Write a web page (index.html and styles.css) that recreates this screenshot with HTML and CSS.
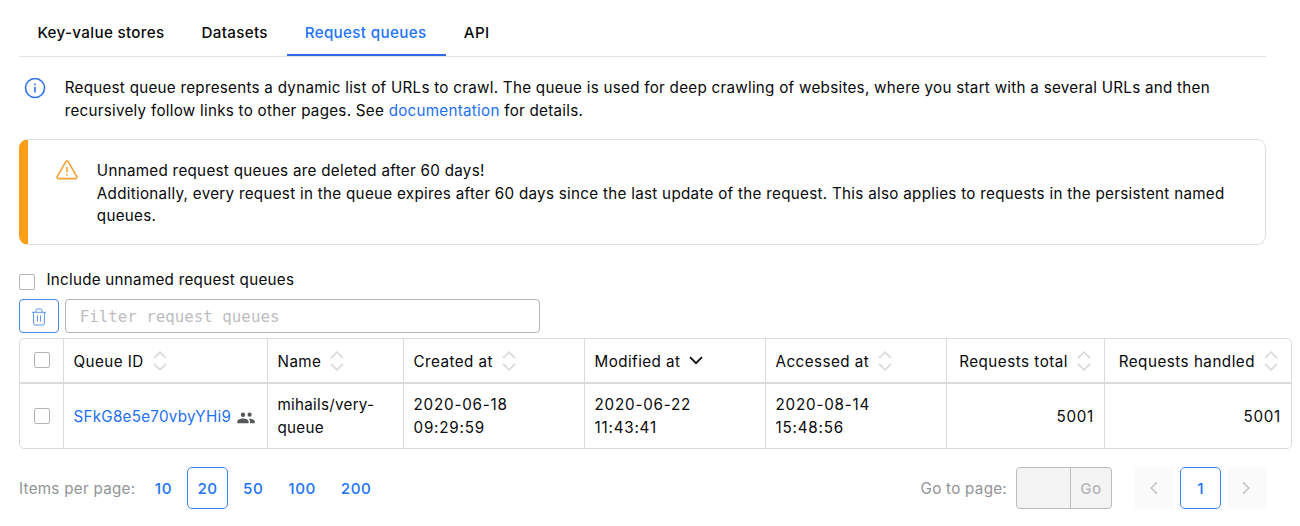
FILE: index.html
```html
<!DOCTYPE html>
<html lang="en">
<head>
<meta charset="utf-8">
<title>Request queues</title>
<link rel="stylesheet" href="styles.css">
</head>
<body>
<svg class="defs" width="0" height="0">
  <symbol id="sort" viewBox="0 0 14 20"><path d="M1 7.2 7 1.2l6 6M1 12.800l6 6 6-6"/></symbol>
</svg>
<main class="page">
  <nav class="tabs">
    <a class="tab tab-stores">Key-value stores</a>
    <a class="tab tab-datasets">Datasets</a>
    <a class="tab tab-queues active">Request queues</a>
    <a class="tab tab-api">API</a>
  </nav>

  <section class="info">
    <svg class="info-icon" viewBox="0 0 22 22"><circle cx="11" cy="11" r="9.5"/><path d="M11 9.800v5.600M11 6.600v1.600"/></svg>
    <p class="text">Request queue represents a dynamic list of URLs to crawl. The queue is used for deep crawling of websites, where you start with a several URLs and then<br>recursively follow links to other pages. See <a class="link">documentation</a> for details.</p>
  </section>

  <section class="warning">
    <svg class="warning-icon" viewBox="0 0 22 20"><path d="M9.700 1.800a1.500 1.500 0 0 1 2.600 0l8.400 14.600a1.500 1.500 0 0 1-1.300 2.200H2.600a1.500 1.500 0 0 1-1.300-2.200z"/><path d="M11 7v5.200M11 14.200v1.500"/></svg>
    <p class="text">Unnamed request queues are deleted after 60 days!<br>Additionally, every request in the queue expires after 60 days since the last update of the request. This also applies to requests in the persistent named<br>queues.</p>
  </section>

  <label class="include"><span class="checkbox"></span><span>Include unnamed request queues</span></label>

  <div class="toolbar">
    <button class="delete"><svg viewBox="0 0 16 18"><path d="M1 4.300h14M5 4V2.300c0-.8.5-1.300 1.300-1.300h3.400c.8 0 1.300.5 1.300 1.300V4M2.600 4.500v11.200c0 .8.5 1.300 1.300 1.300h8.200c.8 0 1.300-.5 1.300-1.300V4.500M6.500 7.500v6M9.500 7.500v6"/></svg></button>
    <div class="filter">Filter request queues</div>
  </div>

  <div class="table">
    <div class="row head">
      <div class="cell check"><span class="checkbox"></span></div>
      <div class="cell"><span>Queue ID</span><svg class="sort"><use href="#sort"/></svg></div>
      <div class="cell"><span>Name</span><svg class="sort"><use href="#sort"/></svg></div>
      <div class="cell"><span>Created at</span><svg class="sort"><use href="#sort"/></svg></div>
      <div class="cell"><span>Modified at</span><svg class="sorted" viewBox="0 0 14 9"><path d="m1 1.200 6 6 6-6"/></svg></div>
      <div class="cell"><span>Accessed at</span><svg class="sort"><use href="#sort"/></svg></div>
      <div class="cell num"><span>Requests total</span><svg class="sort"><use href="#sort"/></svg></div>
      <div class="cell num"><span>Requests handled</span><svg class="sort"><use href="#sort"/></svg></div>
    </div>
    <div class="row body">
      <div class="cell check"><span class="checkbox"></span></div>
      <div class="cell"><a class="link queue-id">SFkG8e5e70vbyYHi9</a><svg class="people" viewBox="0 0 18 12"><circle cx="6" cy="2.700" r="2.200"/><circle cx="12.600" cy="2.700" r="2.100"/><path d="M.3 11.300V9.700C.3 7.700 3.500 6.600 6 6.600s5.600 1.100 5.600 3.100v1.600zM13 11.300V9.600c0-1.200-.5-2.100-1.300-2.900 2.800-.3 6.100.9 6.100 2.900v1.700z"/></svg></div>
      <div class="cell two-line">mihails/very-<br>queue</div>
      <div class="cell two-line date">2020-06-18<br>09:29:59</div>
      <div class="cell two-line date">2020-06-22<br>11:43:41</div>
      <div class="cell two-line date">2020-08-14<br>15:48:56</div>
      <div class="cell num">5001</div>
      <div class="cell num">5001</div>
    </div>
  </div>

  <footer class="footer">
    <div class="sizes">
      <span class="label">Items per page:</span>
      <a class="size">10</a><a class="size selected">20</a><a class="size">50</a><a class="size">100</a><a class="size">200</a>
    </div>
    <div class="pager">
      <span class="label">Go to page:</span>
      <div class="goto"><span class="goto-input"></span><span class="goto-btn">Go</span></div>
      <span class="arrow"><svg viewBox="0 0 8 14"><path d="M7 1.200 1.200 7 7 12.800"/></svg></span>
      <a class="size selected current">1</a>
      <span class="arrow next"><svg viewBox="0 0 8 14"><path d="M1 1.200 6.800 7 1 12.800"/></svg></span>
    </div>
  </footer>
</main>
</body>
</html>
```
FILE: styles.css
```css
* { box-sizing: border-box; }
body { margin: 0; background: #fff; color: #08090b; font: 15.2px/22.6px Inter, "Liberation Sans", sans-serif; letter-spacing: .27px; overflow: hidden; }
.defs { position: absolute; }
svg { fill: none; stroke: currentColor; flex: none; }
.page { width: 1300px; height: 526px; padding: 10px 8px 0 19px; }
.tabs { display: flex; width: 1247px; height: 47px; border-bottom: 1px solid #dfe2e6; font-weight: 500; letter-spacing: .33px; }
.tab { height: 46px; padding: 12px 18px 0 18.400px; white-space: nowrap; }
.tab.active { padding-left: 17.700px; color: #2173f8; border-bottom: 2px solid #2e6be6; }
.tab-stores { width: 164px; }
.tab-datasets { width: 104px; }
.tab-queues { width: 159px; }
.tab-api { padding-left: 17.800px; }
.link { color: #1f70f2; }
.text { margin: 0; white-space: nowrap; }
.info { display: flex; height: 66px; padding: 19px 0 0 5px; gap: 18.700px; }
.info .text { line-height: 23px; }
.info-icon { width: 22px; height: 22px; margin-top: 1px; color: #2e72ec; stroke-width: 1.6; }
.warning { display: flex; gap: 18.800px; width: 1247px; height: 106px; margin-top: 16px; padding: 20px 0 0 28px; border: 1px solid #d9dfe3; border-left: 9px solid #fb9e18; border-radius: 9px; letter-spacing: .29px; }
.warning-icon { width: 22px; height: 20px; color: #f6a030; stroke-width: 1.6; }
.include { display: flex; align-items: center; gap: 11.400px; height: 23px; margin-top: 24px; }
.checkbox { flex: none; width: 16px; height: 16px; border: 1px solid #b4b5b8; border-radius: 2px; background: #fff; }
.include .checkbox { margin-top: 2px; }
.toolbar { display: flex; gap: 6px; margin-top: 7px; }
.delete { display: flex; align-items: center; justify-content: center; width: 40px; height: 34px; padding: 2px 0 0; border: 1px solid #4a87f0; border-radius: 4px; background: #fff; color: #5b93f0; }
.delete svg { width: 16px; height: 18px; stroke-width: 1; }
.filter { width: 475px; height: 34px; padding: 5.900px 13.700px; border: 1px solid #b5b5b8; border-radius: 4px; color: #bdbdc0; font-family: "DejaVu Sans Mono", monospace; font-size: 15.800px; letter-spacing: 0; }
.table { width: 1273px; height: 111px; margin-top: 5px; border: 1px solid #d8dcdf; border-radius: 5px; overflow: hidden; }
.row { display: grid; grid-template-columns: 44px 204px 136px 181px 181px 181px 158px 1fr; }
.head { height: 45px; border-bottom: 2px solid #d8dcdf; letter-spacing: .45px; }
.body { height: 64px; }
.cell { display: flex; align-items: center; padding: 2px 10px 0 9.500px; border-right: 1px solid #d8dcdf; white-space: nowrap; }
.head .cell:not(.check) { padding-top: 3px; }
.cell:last-child { border-right: 0; }
.check { padding: 0 0 0 14px; }
.head .check { padding-bottom: 1px; }
.body .cell:not(.check) { padding-top: 3px; }
.body .cell.two-line { padding-top: 1px; }
.date { letter-spacing: .8px; }
.num { justify-content: flex-end; letter-spacing: .5px; }
.body .num { letter-spacing: .75px; padding-right: 10px; }
.head .num { padding-right: 13px; }
.sort { width: 14px; height: 20px; margin: -3px 0 0 9px; color: #d9dbdc; stroke-width: 1.8; }
.sorted { width: 14px; height: 9px; margin: -3px 0 0 9px; stroke-width: 1.8; }
.people { width: 18px; height: 12px; margin-left: 6px; fill: #55585b; stroke: none; }
.footer { display: flex; justify-content: space-between; width: 1247px; margin-top: 18px; }
.sizes, .pager { display: flex; align-items: center; height: 42px; }
.label { padding-top: 2px; color: #929497; white-space: nowrap; }
.sizes .label { margin-right: 9.500px; }
.size { color: #2173f8; font-weight: 500; }
.sizes .size { display: flex; align-items: center; justify-content: center; height: 42px; padding: 2px 10px 0; margin-right: 5px; letter-spacing: .55px; }
.sizes .selected { width: 41px; padding-left: 10px; }
.selected { border: 1px solid #3b7ff2; border-radius: 5px; }
.goto { display: flex; width: 96px; height: 42px; margin-left: 9px; border: 1px solid #bcbdbe; border-radius: 4px; background: #f4f4f4; color: #b6b6b8; }
.goto-input { width: 54px; border-right: 1px solid #bcbdbe; }
.goto-btn { flex: 1; display: flex; align-items: center; justify-content: center; padding-top: 2px; font-weight: 500; letter-spacing: .6px; }
.arrow { display: flex; align-items: center; justify-content: center; width: 38px; height: 42px; background: #fafafa; color: #c2c3c5; }
.arrow svg { width: 8px; height: 14px; margin-top: -1px; stroke-width: 1.5; }
.next svg { margin-left: -3px; }
.goto + .arrow { margin-left: 23px; }
.current { display: flex; align-items: center; justify-content: center; width: 41px; height: 42px; margin: 0 7px; padding: 2px 0 0; }
```
